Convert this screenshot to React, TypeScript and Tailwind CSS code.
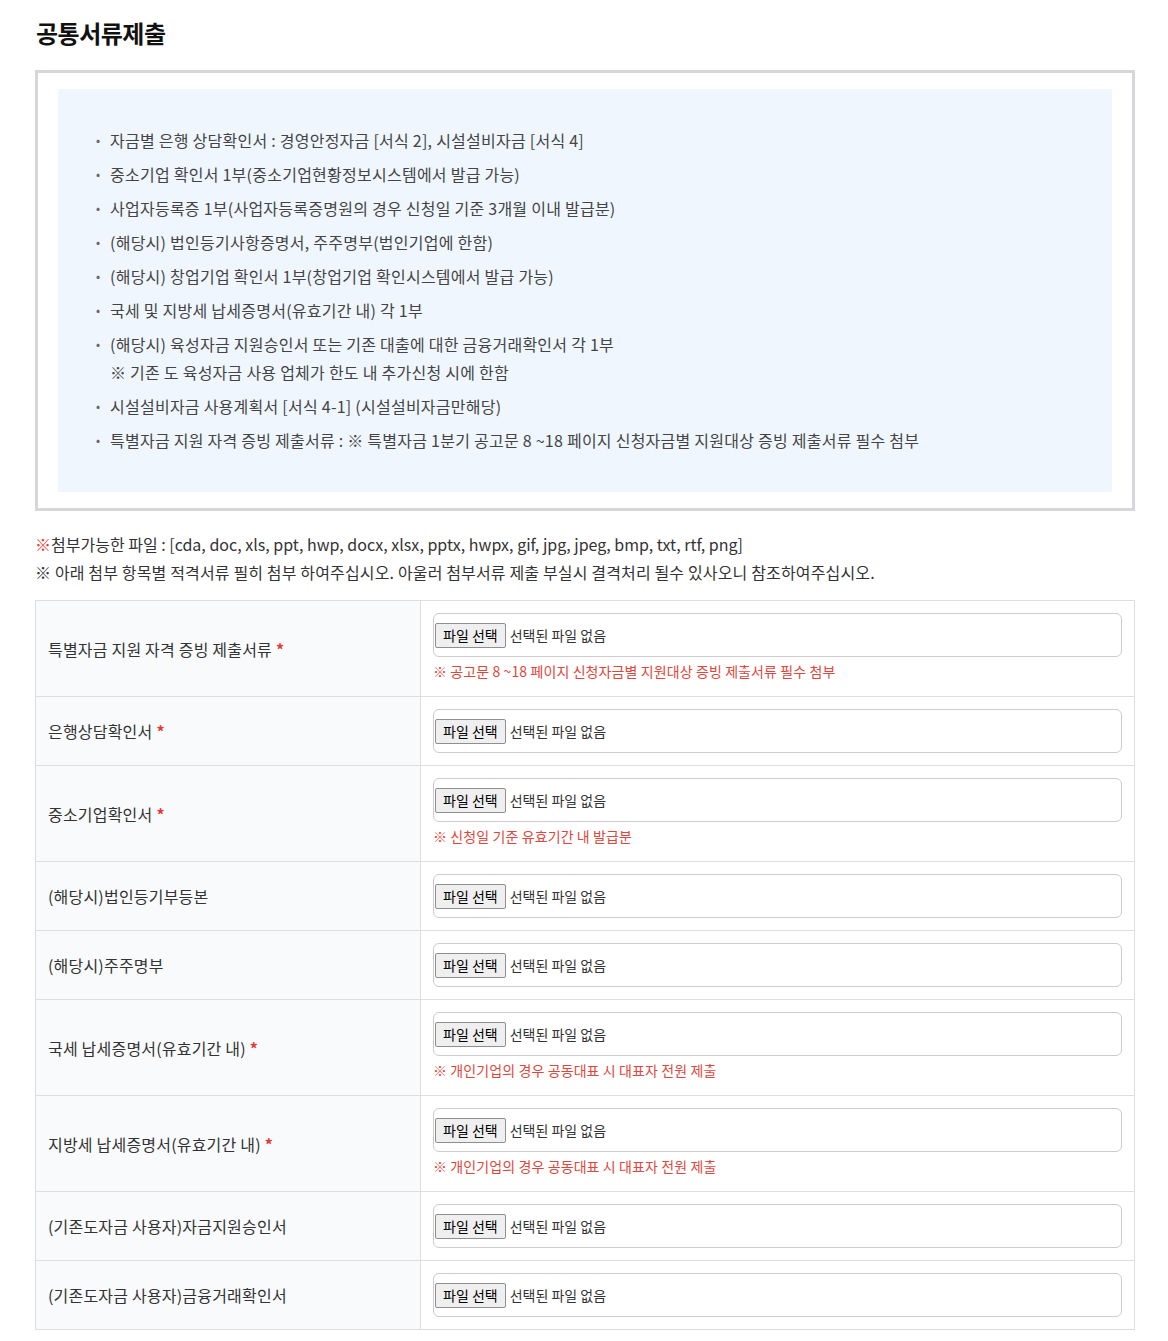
import React from 'react';

const docs = [
  { text: '자금별 은행 상담확인서 : 경영안정자금 [서식 2], 시설설비자금 [서식 4]' },
  { text: '중소기업 확인서 1부(중소기업현황정보시스템에서 발급 가능)' },
  { text: '사업자등록증 1부(사업자등록증명원의 경우 신청일 기준 3개월 이내 발급분)' },
  { text: '(해당시) 법인등기사항증명서, 주주명부(법인기업에 한함)' },
  { text: '(해당시) 창업기업 확인서 1부(창업기업 확인시스템에서 발급 가능)' },
  { text: '국세 및 지방세 납세증명서(유효기간 내) 각 1부' },
  { text: '(해당시) 육성자금 지원승인서 또는 기존 대출에 대한 금융거래확인서 각 1부', sub: '※ 기존 도 육성자금 사용 업체가 한도 내 추가신청 시에 한함' },
  { text: '시설설비자금 사용계획서 [서식 4-1] (시설설비자금만해당)' },
  { text: '특별자금 지원 자격 증빙 제출서류 : ※ 특별자금 1분기 공고문 8 ~18 페이지 신청자금별 지원대상 증빙 제출서류 필수 첨부' },
];

const rows = [
  { label: '특별자금 지원 자격 증빙 제출서류', req: true, note: '※ 공고문 8 ~18 페이지 신청자금별 지원대상 증빙 제출서류 필수 첨부' },
  { label: '은행상담확인서', req: true },
  { label: '중소기업확인서', req: true, note: '※ 신청일 기준 유효기간 내 발급분' },
  { label: '(해당시)법인등기부등본' },
  { label: '(해당시)주주명부' },
  { label: '국세 납세증명서(유효기간 내)', req: true, note: '※ 개인기업의 경우 공동대표 시 대표자 전원 제출' },
  { label: '지방세 납세증명서(유효기간 내)', req: true, note: '※ 개인기업의 경우 공동대표 시 대표자 전원 제출' },
  { label: '(기존도자금 사용자)자금지원승인서' },
  { label: '(기존도자금 사용자)금융거래확인서' },
];

function FileField() {
  return (
    <div className="h-[44px] border border-[#cccccc] rounded-[6px] bg-white flex items-center pl-[1px]">
      <span className="h-[25px] px-[7px] flex items-center border border-[#8f8f8f] rounded-[2px] bg-[#efefef] text-[14px] text-black">파일 선택</span>
      <span className="ml-[4px] text-[14px] text-[#333]">선택된 파일 없음</span>
    </div>
  );
}

export default function App() {
  return (
    <div className="bg-white min-h-screen pl-[35px] pr-[33px] pt-[16px] pb-[10px] text-[#333]" style={{ fontFamily: '"Noto Sans CJK KR", "Noto Sans", sans-serif' }}>
      <h2 className="text-[24px] font-bold text-[#111] tracking-[-0.5px] leading-[34px] pl-[1px]">공통서류제출</h2>

      <div className="mt-[20px] border-[3px] border-[#d5d7db] px-[20px] py-[16px]">
        <div className="bg-[#eff6fd] pl-[38px] pr-[20px] pt-[37px] pb-[38px]">
          <ul className="flex flex-col gap-[6px]">
            {docs.map((d, i) => (
              <li key={i} className="flex text-[16px] text-[#444] leading-[28px] tracking-[0.25px]">
                <span className="w-[14px] shrink-0 text-[12px] text-[#666]">•</span>
                <div>
                  <div>{d.text}</div>
                  {d.sub && <div>{d.sub}</div>}
                </div>
              </li>
            ))}
          </ul>
        </div>
      </div>

      <div className="mt-[19px] text-[16px] leading-[28px] text-[#333]">
        <p><span className="text-[#e53935]">※</span>첨부가능한 파일 : [cda, doc, xls, ppt, hwp, docx, xlsx, pptx, hwpx, gif, jpg, jpeg, bmp, txt, rtf, png]</p>
        <p className="tracking-[0.15px]">※ 아래 첨부 항목별 적격서류 필히 첨부 하여주십시오. 아울러 첨부서류 제출 부실시 결격처리 될수 있사오니 참조하여주십시오.</p>
      </div>

      <div className="mt-[14px] border border-[#dedede]">
        {rows.map((r, i) => (
          <div key={i} className={`flex ${i > 0 ? 'border-t border-[#dedede]' : ''}`}>
            <div className="w-[385px] shrink-0 bg-[#f9fafb] border-r border-[#dedede] px-[12px] flex items-center text-[16px] tracking-[0.2px] text-[#333]">
              <span>{r.label}</span>
              {r.req && <span className="ml-[4px] text-[#e53935] font-bold">*</span>}
            </div>
            <div className="flex-1 px-[12px] py-[12px]">
              <FileField />
              {r.note && <p className="mt-[4px] mb-[2px] text-[14px] leading-[21px] tracking-[0.1px] text-[#e0473c]">{r.note}</p>}
            </div>
          </div>
        ))}
      </div>
    </div>
  );
}
